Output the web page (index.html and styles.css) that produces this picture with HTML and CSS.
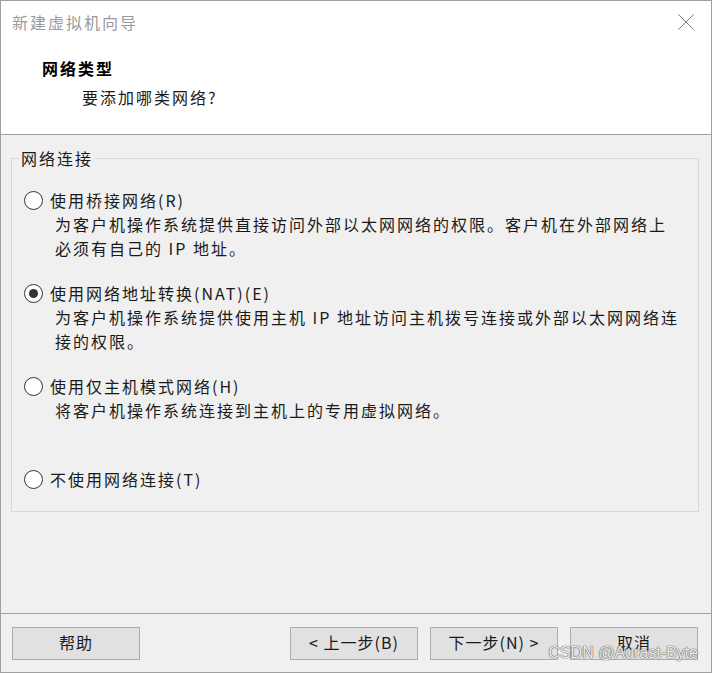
FILE: index.html
```html
<!doctype html>
<html lang="zh-CN">
<head>
    <meta charset="UTF-8">
    <title>新建虚拟机向导</title>
    <link rel="stylesheet" href="styles.css">
</head>
<body>
<div class="window">
    <div class="header">
        <div class="titlebar">
            <span class="title">新建虚拟机向导</span>
            <svg class="close" width="16" height="16" viewBox="0 0 16 16">
                <path d="M0.5 0.5 L15.5 15.5 M15.5 0.5 L0.5 15.5" stroke="#7a7a7a" stroke-width="1" fill="none"/>
            </svg>
        </div>
        <p class="heading">网络类型</p>
        <p class="subtitle">要添加哪类网络?</p>
    </div>
    <div class="main">
        <fieldset class="group">
            <legend>网络连接</legend>
            <div class="option">
                <div class="label"><span class="radio"></span>使用桥接网络(R)</div>
                <p class="desc">为客户机操作系统提供直接访问外部以太网网络的权限。客户机在外部网络上<br>必须有自己的 IP 地址。</p>
            </div>
            <div class="option">
                <div class="label"><span class="radio checked"></span>使用网络地址转换(NAT)(E)</div>
                <p class="desc">为客户机操作系统提供使用主机 IP 地址访问主机拨号连接或外部以太网网络连<br>接的权限。</p>
            </div>
            <div class="option">
                <div class="label"><span class="radio"></span>使用仅主机模式网络(H)</div>
                <p class="desc">将客户机操作系统连接到主机上的专用虚拟网络。</p>
            </div>
            <div class="option last">
                <div class="label"><span class="radio"></span>不使用网络连接(T)</div>
            </div>
        </fieldset>
    </div>
    <div class="footer">
        <button class="btn">帮助</button>
        <div class="spacer"></div>
        <button class="btn">&lt; 上一步(B)</button>
        <button class="btn">下一步(N) &gt;</button>
        <button class="btn">取消</button>
    </div>
    <div class="watermark">CSDN @Aurast-Byte</div>
</div>
</body>
</html>
```

FILE: styles.css
```css
* {
    padding: 0;
    margin: 0;
    box-sizing: border-box;
}

html, body {
    width: 712px;
    height: 673px;
    font-family: "Noto Sans CJK SC", "Noto Sans", sans-serif;
    font-size: 16px;
    letter-spacing: 2px;
    color: #1a1a1a;
    background-color: #f0f0f0;
}

.window {
    position: relative;
    width: 712px;
    height: 673px;
    border: 1px solid #a0a0a0;
    display: flex;
    flex-direction: column;
    background-color: #f0f0f0;
}

.header {
    height: 134px;
    background-color: #fff;
    border-bottom: 1px solid #a0a0a0;
}

.titlebar {
    height: 42px;
    display: flex;
    align-items: center;
    justify-content: space-between;
    padding: 0 17px 0 11px;
}

.title {
    color: #9a9a9a;
    line-height: 24px;
}

.close {
    display: block;
}

.heading {
    margin-top: 13px;
    padding-left: 41px;
    line-height: 24px;
    font-weight: bold;
    color: #000;
}

.subtitle {
    margin-top: 5px;
    padding-left: 81px;
    line-height: 24px;
}

.main {
    flex: 1;
    padding: 11px 12px 0 10px;
}

.group {
    border: 1px solid #d8d8d8;
    padding: 0 0 20px 12px;
    display: flex;
    flex-direction: column;
    gap: 21px;
}

.group legend {
    margin-left: -5px;
    padding: 0 2px;
    line-height: 24px;
}

.option:first-of-type {
    margin-top: 18px;
}

.option.last {
    margin-top: 24px;
}

.label {
    display: flex;
    align-items: center;
    line-height: 24px;
}

.radio {
    width: 19px;
    height: 19px;
    border: 1px solid #333;
    border-radius: 50%;
    background-color: #fff;
    margin-right: 7px;
    display: flex;
    align-items: center;
    justify-content: center;
}

.radio.checked::after {
    content: "";
    width: 9px;
    height: 9px;
    border-radius: 50%;
    background-color: #333;
}

.desc {
    padding-left: 31px;
    line-height: 24px;
}

.footer {
    height: 59px;
    border-top: 1px solid #a0a0a0;
    padding: 13px 13px 12px 11px;
    display: flex;
    gap: 12px;
}

.spacer {
    flex: 1;
}

.btn {
    width: 128px;
    height: 33px;
    border: 1px solid #adadad;
    background-color: #e1e1e1;
    font-family: "Noto Sans CJK SC", "Noto Sans", sans-serif;
    font-size: 16px;
    line-height: 20px;
    padding-bottom: 3px;
    letter-spacing: 1px;
    color: #1a1a1a;
}

.watermark {
    position: absolute;
    right: 13px;
    bottom: 10px;
    font-family: "Liberation Sans", sans-serif;
    font-size: 16px;
    letter-spacing: 0;
    color: rgba(255, 255, 255, 0.9);
    text-shadow: 0 0 1px #666, 0 0 1px #666, 0 0 1px #666;
}
```
